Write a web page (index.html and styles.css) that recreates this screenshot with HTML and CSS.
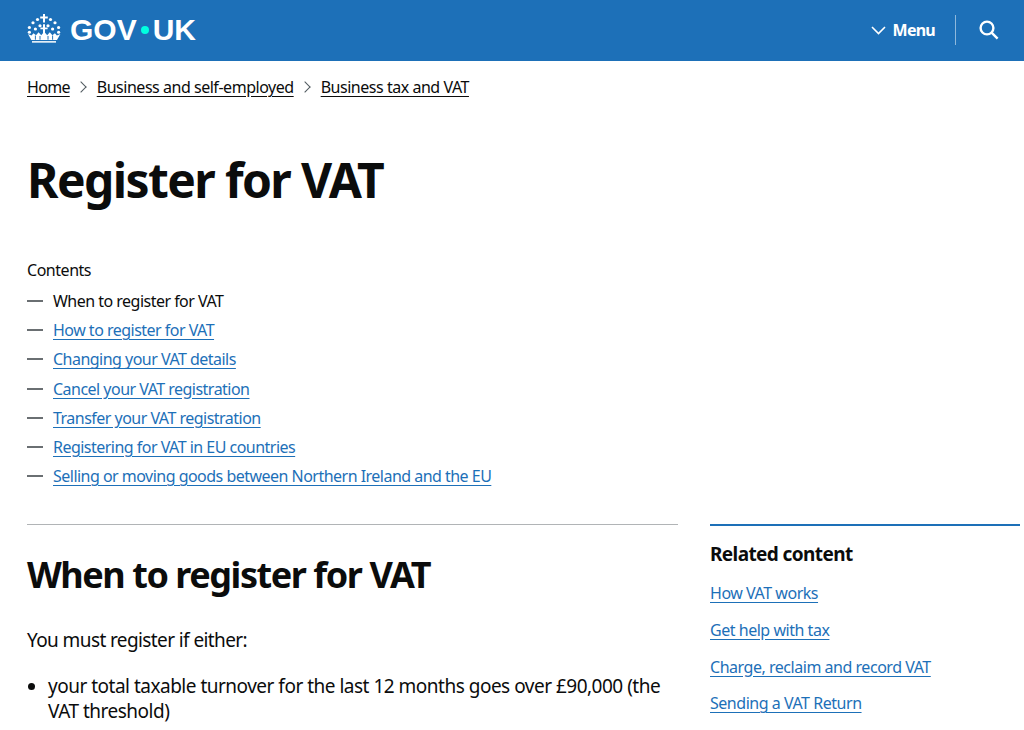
FILE: index.html
```html
<!DOCTYPE html>
<html lang="en">
<head>
    <meta charset="UTF-8">
    <meta name="viewport" content="width=device-width, initial-scale=1.0">
    <title>Register for VAT</title>
    <link rel="stylesheet" href="styles.css">
</head>
<body>
    <header class="site-header">
        <a class="logo" href="#">
            <svg class="crown" width="34" height="30" viewBox="0 0 34 32" preserveAspectRatio="none" fill="#fff">
                <path d="M16 1h2v2.8h2.8v2H18v4.4h-2V5.8h-2.8v-2H16z"/>
                <circle cx="10.5" cy="7" r="1.6"/><circle cx="23.5" cy="7" r="1.6"/>
                <circle cx="6" cy="10.5" r="1.6"/><circle cx="28" cy="10.5" r="1.6"/>
                <circle cx="2.4" cy="15.5" r="1.6"/><circle cx="31.6" cy="15.5" r="1.6"/>
                <circle cx="2.4" cy="20.5" r="1.6"/><circle cx="31.6" cy="20.5" r="1.6"/>
                <circle cx="13" cy="13.5" r="1.6"/><circle cx="21" cy="13.5" r="1.6"/>
                <circle cx="8.4" cy="17" r="1.6"/><circle cx="25.6" cy="17" r="1.6"/>
                <path d="M16 12h2v3.4h2.6v2H18v4.6h-2v-4.6h-2.6v-2H16z"/>
                <path d="M1 22.5l3.5 1.5 2-2.4 2.5 2 2.6-3.2 2.6 3.4 3-3.8 3 3.8 2.6-3.4 2.6 3.2 2.5-2 2 2.4 3.5-1.5-3.4 6.4H4.4z"/>
                <path d="M8.4 24v4.5M13 24.5v4M21 24.5v4M25.6 24v4.5" fill="none" stroke="#1d70b8" stroke-width="1"/>
                <path d="M5 30h24v1.6H5z"/>
            </svg>
            <span class="logo-text">GOV<span class="logo-dot"></span>UK</span>
        </a>
        <nav class="header-nav">
            <a class="menu-link" href="#">
                <svg width="15" height="9" viewBox="0 0 15 9" fill="none" stroke="#fff" stroke-width="1.6"><path d="M1 1l6.5 6.5L14 1"/></svg>
                Menu
            </a>
            <a class="search-link" href="#" aria-label="Search">
                <svg width="22" height="22" viewBox="0 0 22 22" fill="none" stroke="#fff" stroke-width="2.4"><circle cx="9" cy="9" r="6.4"/><path d="M13.6 13.6l6 6"/></svg>
            </a>
        </nav>
    </header>

    <div class="page">
        <nav class="breadcrumbs">
            <a href="#">Home</a>
            <span class="chevron"></span>
            <a href="#">Business and self-employed</a>
            <span class="chevron"></span>
            <a href="#">Business tax and VAT</a>
        </nav>

        <h1>Register for VAT</h1>

        <div class="contents">
            <p class="contents-title">Contents</p>
            <ul class="contents-list">
                <li>When to register for VAT</li>
                <li><a href="#">How to register for VAT</a></li>
                <li><a href="#">Changing your VAT details</a></li>
                <li><a href="#">Cancel your VAT registration</a></li>
                <li><a href="#">Transfer your VAT registration</a></li>
                <li><a href="#">Registering for VAT in EU countries</a></li>
                <li><a href="#">Selling or moving goods between Northern Ireland and the EU</a></li>
            </ul>
        </div>

        <div class="columns">
            <main class="main-col">
                <h2>When to register for VAT</h2>
                <p class="lead">You must register if either:</p>
                <ul class="bullets">
                    <li>your total taxable turnover for the last 12 months goes over £90,000 (the VAT threshold)</li>
                </ul>
            </main>
            <aside class="related">
                <h3>Related content</h3>
                <ul>
                    <li><a href="#">How VAT works</a></li>
                    <li><a href="#">Get help with tax</a></li>
                    <li><a href="#">Charge, reclaim and record VAT</a></li>
                    <li><a href="#">Sending a VAT Return</a></li>
                </ul>
            </aside>
        </div>
    </div>
</body>
</html>
```

FILE: styles.css
```css
html, body {
    height: 730px;
    overflow: hidden;
}

body {
    font-family: "Noto Sans", Arial, sans-serif;
    color: #0b0c0c;
    background-color: #ffffff;
    margin: 0;
    font-size: 16px;
    letter-spacing: -0.47px;
}

a {
    color: #1d70b8;
    text-underline-offset: 3px;
}

.site-header {
    background-color: #1d70b8;
    height: 60px;
    padding: 0 24px 1px 27px;
    display: flex;
    justify-content: space-between;
    align-items: center;
}

.logo {
    display: flex;
    align-items: center;
    gap: 9px;
    color: #fff;
    text-decoration: none;
}

.crown {
    margin-bottom: 5px;
}

.logo-text {
    font-family: "Liberation Sans", Arial, sans-serif;
    font-weight: 700;
    font-size: 30px;
    letter-spacing: 0;
    display: flex;
    align-items: center;
}

.logo-dot {
    width: 8px;
    height: 8px;
    border-radius: 50%;
    background-color: #00ffe0;
    margin: 0 4px;
}

.header-nav {
    display: flex;
    align-items: center;
}

.menu-link {
    display: flex;
    align-items: center;
    gap: 7px;
    color: #fff;
    font-weight: 700;
    font-size: 16px;
    letter-spacing: -0.75px;
    text-decoration: none;
    padding-right: 20px;
    border-right: 1px solid #8eb8dc;
    height: 30px;
}

.search-link {
    display: flex;
    padding-left: 22px;
}

.page {
    padding: 0 4px 0 27px;
}

.breadcrumbs {
    display: flex;
    align-items: center;
    padding-top: 14px;
    height: 24px;
    line-height: 24px;
}

.breadcrumbs a {
    color: #0b0c0c;
}

.breadcrumbs a:first-child {
    letter-spacing: -0.7px;
}

.chevron {
    width: 7px;
    height: 7px;
    border-top: 1px solid #505a5f;
    border-right: 1px solid #505a5f;
    transform: rotate(45deg);
    margin: 0 12px 0 7px;
}

h1 {
    font-size: 48px;
    line-height: 56px;
    font-weight: 700;
    letter-spacing: -1.6px;
    margin: 53px 0 0;
}

.contents {
    margin-top: 50px;
}

.contents-title {
    margin: 0;
    line-height: 24px;
}

.contents-list {
    list-style: none;
    margin: 7px 0 0;
    padding: 0;
    letter-spacing: -0.52px;
}

.contents-list li {
    line-height: 24px;
    margin-bottom: 5.2px;
    padding-left: 26px;
    position: relative;
}

.contents-list li::before {
    content: "";
    position: absolute;
    left: 0;
    top: 11px;
    width: 16px;
    height: 2px;
    background-color: #6a6f72;
}

.columns {
    display: flex;
    gap: 32px;
    margin-top: 36px;
}

.main-col {
    width: 651px;
    flex-shrink: 0;
    border-top: 1px solid #b1b4b6;
}

h2 {
    font-size: 36px;
    line-height: 40px;
    font-weight: 700;
    letter-spacing: -1.45px;
    margin: 30px 0 0;
}

.lead {
    font-size: 19px;
    line-height: 25px;
    letter-spacing: -0.6px;
    margin: 33px 0 0;
}

.bullets {
    font-size: 19px;
    line-height: 25px;
    letter-spacing: -0.5px;
    margin: 21px 0 0;
    padding-left: 21px;
}

.related {
    width: 310px;
    flex-shrink: 0;
    border-top: 2px solid #1d70b8;
    padding-top: 16px;
}

h3 {
    font-size: 19px;
    line-height: 25px;
    font-weight: 700;
    letter-spacing: -0.6px;
    margin: 0 0 14px;
}

.related ul {
    list-style: none;
    margin: 0;
    padding: 0;
}

.related li {
    line-height: 24px;
    margin-bottom: 12.7px;
}
```
